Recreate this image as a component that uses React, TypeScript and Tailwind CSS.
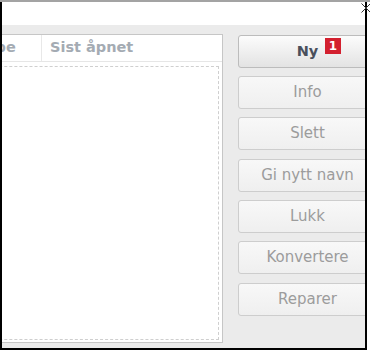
import React from "react";

const buttons: { label: string; mt: string }[] = [
  { label: "Info", mt: "mt-[8px]" },
  { label: "Slett", mt: "mt-[8px]" },
  { label: "Gi nytt navn", mt: "mt-[9px]" },
  { label: "Lukk", mt: "mt-[8px]" },
  { label: "Konvertere", mt: "mt-[8px]" },
  { label: "Reparer", mt: "mt-[9px]" },
];

export default function App() {
  return (
    <div
      className="relative w-[370px] h-[351px] bg-white overflow-hidden"
      style={{ fontFamily: '"DejaVu Sans", Verdana, sans-serif' }}
    >
      {/* close glyph, partly hidden behind the frame */}
      <svg
        className="absolute left-[361px] top-[3px] z-10"
        width="10"
        height="10"
        viewBox="0 0 10 10"
      >
        <path d="M0.5 0.5 L9.5 9.5 M9.5 0.5 L0.5 9.5" stroke="#333" strokeWidth="1" fill="none" />
      </svg>

      <div className="h-[2px] bg-[#a3a3a3]" />
      <div className="flex h-[346px] w-[367px]">
        <div className="w-[2px] bg-black shrink-0" />
        <div className="w-[363px] flex flex-col overflow-hidden">
          <div className="h-[23px] bg-white shrink-0" />
          <div className="flex-1 bg-[#ebebeb] flex items-start pt-[9px]">
            {/* list panel */}
            <div className="ml-[-40px] w-[261px] h-[309px] shrink-0 bg-white border border-[#c6c6c6] flex flex-col">
              <div className="h-[27px] flex border-b border-[#e6e6e6] shrink-0 text-[14.5px] font-bold text-[#a4abb3]">
                <div className="w-[79px] border-r border-[#e8e8e8] pl-[15px] flex items-center whitespace-nowrap">
                  Type
                </div>
                <div className="pl-[8px] flex items-center whitespace-nowrap">Sist åpnet</div>
              </div>
              <div className="flex-1 pt-[4px] pr-[3px] pb-[2px]">
                <div className="h-full ml-[6px] border border-dashed border-[#cfcfcf]" />
              </div>
            </div>

            {/* buttons */}
            <div className="ml-[15px] pt-[1px] flex flex-col shrink-0 w-[139px]">
              <button className="relative h-[33px] w-[139px] rounded-[3px] border border-[#bcbcbc] bg-gradient-to-b from-[#fcfcfc] to-[#e3e3e3] text-[14.5px] font-bold text-[#4a505c] flex items-center justify-center">
                Ny
                <span className="absolute left-[86px] top-[2px] w-[16px] h-[16px] bg-[#d3202f] text-white text-[12px] font-bold leading-none flex items-center justify-center">
                  1
                </span>
              </button>
              {buttons.map((b) => (
                <button
                  key={b.label}
                  className={`${b.mt} h-[33px] w-[139px] rounded-[3px] border border-[#cdcdcd] bg-gradient-to-b from-[#f8f8f8] to-[#efefef] text-[15px] text-[#9c9c9c] flex items-center justify-center whitespace-nowrap`}
                >
                  {b.label}
                </button>
              ))}
            </div>
          </div>
        </div>
        <div className="w-[2px] bg-black shrink-0" />
      </div>
      <div className="h-[2px] w-[367px] bg-black" />
    </div>
  );
}
